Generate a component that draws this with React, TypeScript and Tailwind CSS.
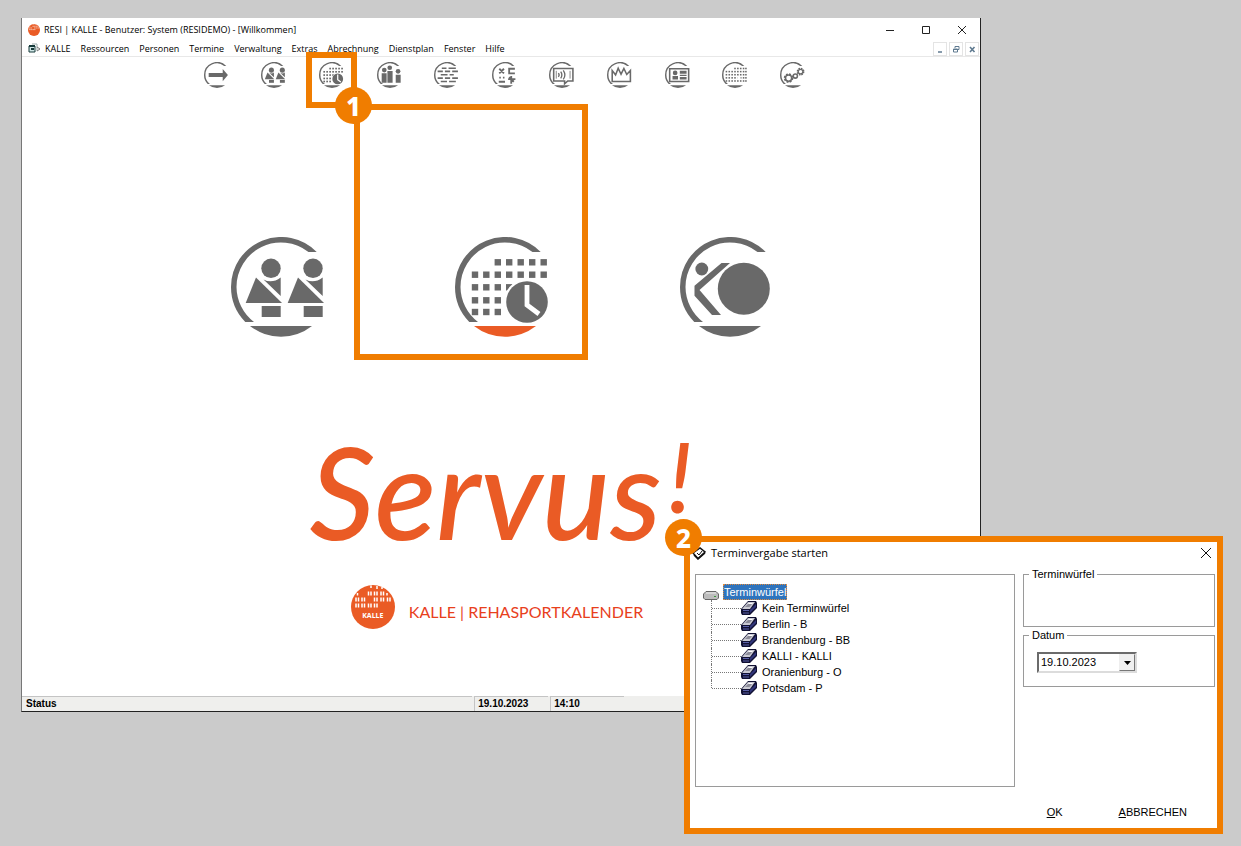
import { useState } from 'react'
import type { ReactNode } from 'react'

const menuItems = [
  'KALLE',
  'Ressourcen',
  'Personen',
  'Termine',
  'Verwaltung',
  'Extras',
  'Abrechnung',
  'Dienstplan',
  'Fenster',
  'Hilfe',
]

const cubes = [
  'Kein Terminwürfel',
  'Berlin - B',
  'Brandenburg - BB',
  'KALLI - KALLI',
  'Oranienburg - O',
  'Potsdam - P',
]

interface RingProps {
  className: string
  footClass?: string
  children: ReactNode
}

// Open ring with a filled foot, shared by all module icons
function Ring({ className, footClass = 'fill-[#696969]', children }: RingProps) {
  return (
    <svg viewBox="0 0 100 100" className={className} fill="#696969" aria-hidden="true">
      <path d="M85.7 15A50 50 0 0 0 0 50A50 50 0 0 0 14.3 85H23A44.5 44.5 0 0 1 5.5 50A44.5 44.5 0 0 1 77.5 15Z" />
      <path d="M19 89H81A50 50 0 0 1 19 89Z" className={footClass} />
      {children}
    </svg>
  )
}

function Person({ x }: { x: number }) {
  return (
    <g transform={`translate(${x} 0)`}>
      <circle cx="40" cy="31.3" r="9.7" />
      <path d="M25 40.5L51 66H14.7Z" />
      <path d="M32.5 42.5Q41 47 49.7 40.5V59Z" />
      <path d="M30.7 69H49.7V80H30.7Z" />
    </g>
  )
}

function PeopleGlyph() {
  return (
    <>
      <Person x={0} />
      <Person x={42} />
    </>
  )
}

const dotX = [20, 31.3, 42.8, 54.2, 65.7, 77.2, 88.7]
const dotY = [25.3, 37.7, 50.3, 63.3, 75]

function CalendarGlyph() {
  return (
    <>
      {dotY.map((y, row) =>
        dotX
          .filter((_, col) => (row === 0 ? col > 1 : row === 1 ? true : row === 2 ? col < 4 : col < 3))
          .map((x) => <rect key={`${x}-${y}`} x={x - 3.2} y={y - 3.2} width="6.4" height="6.4" />)
      )}
      <circle cx="72" cy="65" r="23" fill="#fff" />
      <circle cx="72" cy="65" r="20.8" />
      <path d="M72 48V68L84 77" fill="none" stroke="#fff" strokeWidth="4.8" />
    </>
  )
}

function BallGlyph() {
  return (
    <>
      <circle cx="63.8" cy="51.7" r="26" />
      <circle cx="21.8" cy="32" r="6.4" />
      <path d="M41.5 26H50L19.5 53L41 78H32L14.5 58.7V48.7Z" />
    </>
  )
}

function ArrowGlyph() {
  return <path d="M18 42H72V27L92 50L72 74V58H18Z" />
}

function GroupGlyph() {
  return (
    <>
      <circle cx="28" cy="31" r="9" />
      <circle cx="49" cy="22" r="9" />
      <circle cx="81" cy="36" r="9" />
      <path d="M18 43H37V80H18ZM40 35H60V80H40ZM72 49H91V80H72Z" />
    </>
  )
}

function DashesGlyph() {
  return (
    <path
      d="M30 24H48M56 24H84M14 36H34M42 36H62M70 36H92M26 49H52M60 49H76M14 62H34M42 62H62M70 62H92M26 75H50M58 75H84"
      fill="none"
      stroke="#696969"
      strokeWidth="6"
    />
  )
}

function SymbolsGlyph() {
  return (
    <path
      d="M28 26L46 44M46 26L28 44M88 26H66V44H88M28 60H34M42 60H48M26 76H50M74 54V84M62 66H90M66 58L84 76"
      fill="none"
      stroke="#696969"
      strokeWidth="7"
    />
  )
}

function ScreenGlyph() {
  return (
    <g fill="none" stroke="#696969" strokeWidth="6">
      <path d="M18 25H92V73H72L60 84V73H18Z" fill="#fff" />
      <path d="M28 34V64M81 34V64" strokeWidth="3" />
      <path d="M36 43Q42 50 36 57M45 37Q54 50 45 63M55 32Q67 50 55 67" strokeWidth="5" />
    </g>
  )
}

function CrownGlyph() {
  return (
    <path
      d="M20 75V33L33 50L43 24L54 47L65 25L76 48L90 33V75Z"
      fill="#fff"
      stroke="#696969"
      strokeWidth="6"
    />
  )
}

function CardGlyph() {
  return (
    <>
      <path d="M18 26H91V75H18Z" fill="#fff" stroke="#696969" strokeWidth="6" />
      <circle cx="39" cy="42" r="9" />
      <path d="M29 54H50V67H29ZM57 34H83V45H57ZM57 49H83V54H57ZM57 58H83V67H57Z" />
    </>
  )
}

function PlanGlyph() {
  return (
    <>
      {[25, 37, 49, 61, 73].map((y, row) =>
        [17, 28, 39, 50, 61, 72, 83, 92]
          .filter((x) => row > 0 || x > 40)
          .map((x) => <rect key={`${x}-${y}`} x={x - 3} y={y - 3} width="6" height="6" />)
      )}
      <circle cx="65" cy="62" r="7" fill="#fff" />
    </>
  )
}

function GearsGlyph() {
  return (
    <g fill="#fff" stroke="#696969">
      <circle cx="33" cy="62" r="15" strokeWidth="7" strokeDasharray="7 4.8" />
      <circle cx="33" cy="62" r="12" strokeWidth="6" />
      <circle cx="59" cy="54" r="8" strokeWidth="6" />
      <circle cx="79" cy="37" r="12" strokeWidth="6" strokeDasharray="6 3.4" />
      <circle cx="79" cy="37" r="9" strokeWidth="5" />
    </g>
  )
}

const tools = [
  { label: 'Beenden', glyph: <ArrowGlyph /> },
  { label: 'Personen', glyph: <PeopleGlyph /> },
  { label: 'Termine', glyph: <CalendarGlyph /> },
  { label: 'Gruppen', glyph: <GroupGlyph /> },
  { label: 'Listen', glyph: <DashesGlyph /> },
  { label: 'Abrechnung', glyph: <SymbolsGlyph /> },
  { label: 'Kartenleser', glyph: <ScreenGlyph /> },
  { label: 'Statistik', glyph: <CrownGlyph /> },
  { label: 'Ausweis', glyph: <CardGlyph /> },
  { label: 'Dienstplan', glyph: <PlanGlyph /> },
  { label: 'Einstellungen', glyph: <GearsGlyph /> },
]

function LogoMark({ className }: { className: string }) {
  return (
    <svg viewBox="0 0 44 44" className={className} aria-hidden="true">
      <circle cx="22" cy="22" r="22" fill="#ea5b25" />
      <path
        d="M20 .5V3M26 1V4M31 2V4M17.500 6.500V10.500M20 6.500V10.500M23.500 6.500V10.500M26 6.500V10.500M30 6.500V10.500M32.500 6.500V10.500M36 8V10.500M6.500 8V10.500M5 12.500V16.500M7.500 12.500V16.500M11 12.500V16.500M13.500 12.500V16.500M23.500 12.500V16.500M26 12.500V16.500M30 12.500V16.500M32.500 12.500V16.500M36.500 12.500V16.500M39 12.500V16.500M5 18.500V22.500M7.500 18.500V22.500M11 18.500V22.500M13.500 18.500V22.500M17.500 18.500V22.500M20 18.500V22.500M23.500 18.500V22.500M26 18.500V22.500"
        stroke="#fff"
        strokeWidth="1.5"
      />
    </svg>
  )
}

function TitleBar() {
  return (
    <header className="flex h-[23px] items-center pl-[6px] pr-[13px]">
      <LogoMark className="mr-[4px] size-3" />
      <h1 className="flex-1 whitespace-nowrap text-[9px]">
        RESI | KALLE - Benutzer: System (RESIDEMO) - [Willkommen]
      </h1>
      <div className="flex items-center gap-[26px]">
        <button aria-label="Minimieren">
          <svg viewBox="0 0 10 10" className="size-[10px]" stroke="#222">
            <path d="M1 5.500H9" />
          </svg>
        </button>
        <button aria-label="Maximieren">
          <svg viewBox="0 0 10 10" className="size-[10px]" stroke="#222" fill="none">
            <path d="M1.500 1.500H8.500V8.500H1.500Z" />
          </svg>
        </button>
        <button aria-label="Schließen">
          <svg viewBox="0 0 10 10" className="size-[10px]" stroke="#222">
            <path d="M1 1L9 9M9 1L1 9" />
          </svg>
        </button>
      </div>
    </header>
  )
}

function MenuBar() {
  return (
    <nav className="flex h-4 items-center border-b border-[#e8e8e8] pl-[6px] pr-px">
      <svg viewBox="0 0 13 11" className="mr-[4px] h-[11px] w-[13px]" aria-hidden="true">
        <path d="M1 3H7V9H1Z" fill="#cfe6e6" stroke="#173b3b" />
        <path d="M1 3H7M3 6H6" stroke="#173b3b" strokeWidth="2" />
        <path d="M4 1H9V8" fill="none" stroke="#9aa" />
        <path d="M9 4L12 6L9 8" fill="none" stroke="#777" />
      </svg>
      <ul className="flex flex-1 gap-[10px] text-[9px]">
        {menuItems.map((item) => (
          <li key={item}>
            <button>{item}</button>
          </li>
        ))}
      </ul>
      <div className="flex gap-[2px]">
        <button aria-label="Fenster minimieren" className="border border-[#e4e4e4] p-px">
          <svg viewBox="0 0 10 10" className="size-[10px]" stroke="#5f7a90" strokeWidth="1.500">
            <path d="M3 8H7" />
          </svg>
        </button>
        <button aria-label="Fenster wiederherstellen" className="border border-[#e4e4e4] p-px">
          <svg viewBox="0 0 10 10" className="size-[10px]" stroke="#5f7a90" fill="none">
            <path d="M4 4V2.500H8V5.500H7M2.500 5H6.500V8H2.500ZM2.500 5.500H6.500" />
          </svg>
        </button>
        <button aria-label="Fenster schließen" className="border border-[#e4e4e4] p-px">
          <svg viewBox="0 0 10 10" className="size-[10px]" stroke="#5f7a90" strokeWidth="1.600">
            <path d="M3 3L7.500 8M7.500 3L3 8" />
          </svg>
        </button>
      </div>
    </nav>
  )
}

function Toolbar() {
  return (
    <div className="ml-[17%] mr-[16%] mt-[5px] grid grid-cols-11 pl-[3px] pr-[5px]">
      {tools.map((tool) => (
        <button key={tool.label} aria-label={tool.label} className="flex justify-center">
          <Ring className="size-[26px]">{tool.glyph}</Ring>
        </button>
      ))}
    </div>
  )
}

function MainWindow() {
  return (
    <main className="ml-[21px] mr-[260px] border-b border-l border-r border-[#222] border-l-[#777] bg-white">
      <TitleBar />
      <MenuBar />
      <Toolbar />
      <div className="ml-[15%] mr-[14%] mt-[149px] grid grid-cols-3 pl-[3px] pr-[4px]">
        <button aria-label="Personen" className="flex justify-center">
          <Ring className="size-[100px]">
            <PeopleGlyph />
          </Ring>
        </button>
        <button aria-label="Terminvergabe" className="flex justify-center">
          <Ring className="size-[100px]" footClass="fill-[#ea5b25]">
            <CalendarGlyph />
          </Ring>
        </button>
        <button aria-label="Rehasport" className="flex justify-center">
          <Ring className="size-[100px]">
            <BallGlyph />
          </Ring>
        </button>
      </div>
      <p className="mt-[84px] flex items-start justify-center gap-[6px] font-['Lato',sans-serif] font-medium italic text-[#ea5b25]">
        <span className="text-[128px] leading-[140px]">Servus</span>
        <span className="text-[96px] leading-[110px]">!</span>
      </p>
      <div className="mt-[24px] flex items-center justify-center gap-[14px] pr-[8px]">
        <div className="relative">
          <LogoMark className="size-[44px]" />
          <span className="absolute inset-x-0 top-[26px] text-center text-[7px] font-bold leading-[10px] text-white">
            KALLE
          </span>
        </div>
        <p className="mt-[10px] font-['Lato',sans-serif] text-base text-[#e8401c]">
          KALLE | REHASPORTKALENDER
        </p>
      </div>
      <footer className="mt-[67px] flex h-[15px] bg-[#efefed] font-['Liberation_Sans',Arial,sans-serif] text-[10px] font-bold leading-[14px]">
        <span className="w-[47%] border-t border-[#c4c4c4] pl-[4px]">Status</span>
        <span className="ml-[2px] w-[74px] border-l border-t border-[#c4c4c4] pl-[3px]">19.10.2023</span>
        <span className="ml-[2px] w-[74px] border-l border-t border-[#c4c4c4] pl-[3px]">14:10</span>
      </footer>
    </main>
  )
}

function CubeIcon() {
  return (
    <svg viewBox="0 0 16 15" className="h-[15px] w-4" aria-hidden="true">
      <path d="M0 8L7 0H15L16 2V7L9 14H1L0 12Z" fill="#111133" />
      <path d="M1 8L7 1H14L9 8Z" fill="#c9c9d2" />
      <path d="M4 6L7 3H11L8.500 6Z" fill="#8b8b98" />
      <path d="M8 2H12L11 3H7Z" fill="#fff" />
      <path d="M9 9L15 3V6L9 12Z" fill="#30357a" />
      <path d="M2 9.500H8M2 12H8" stroke="#5a60a8" />
    </svg>
  )
}

function CubeTree() {
  const [selected, setSelected] = useState('Terminwürfel')

  return (
    <div className="min-h-[213px] flex-1 border border-[#9a9a9a] pl-[7px] pt-[9px] text-[11px] leading-4">
      <div className="flex items-end">
        <svg viewBox="0 0 16 9" className="mr-[4px] h-[9px] w-4" aria-hidden="true">
          <path d="M3 .5H13L15.500 3V7L14 8.500H2L.5 7V3Z" fill="#bcbcbc" stroke="#666" />
          <path d="M3 2H13" stroke="#eee" />
          <path d="M11 5.500H13" stroke="#3a9a3a" />
        </svg>
        <button
          onClick={() => setSelected('Terminwürfel')}
          className={selected === 'Terminwürfel' ? 'bg-[#2f74bd] px-px text-white outline-1 -outline-offset-1 outline-dotted outline-[#e08a3c]' : 'px-px'}
        >
          Terminwürfel
        </button>
      </div>
      <ul className="ml-[8px]">
        {cubes.map((cube, i) => (
          <li key={cube} className="flex h-4 items-center">
            <span
              className={
                i === cubes.length - 1
                  ? 'h-2 self-start border-l border-dotted border-[#777]'
                  : 'h-4 border-l border-dotted border-[#777]'
              }
            />
            <span className="w-[29px] border-t border-dotted border-[#777]" />
            <CubeIcon />
            <button
              onClick={() => setSelected(cube)}
              className={selected === cube ? 'ml-[4px] bg-[#2f74bd] px-px text-white' : 'ml-[4px] px-px'}
            >
              {cube}
            </button>
          </li>
        ))}
      </ul>
    </div>
  )
}

function AppointmentDialog() {
  return (
    <section
      role="dialog"
      aria-label="Terminvergabe starten"
      className="absolute left-[684px] right-[18px] top-[536px] border-6 border-[#f07d00] bg-white pb-[8px]"
    >
      <header className="flex h-[22px] items-center pl-[2px] pr-[5px]">
        <svg viewBox="0 0 14 14" className="mr-[5px] size-[14px]" aria-hidden="true">
          <path d="M1 7L8 2L13 6L6 12.500Z" fill="#fff" stroke="#111" strokeWidth="1.500" />
          <path d="M2 9L6 13L13 7" fill="none" stroke="#111" strokeWidth="1.500" />
          <path d="M5 7L7 9L10 5" fill="none" stroke="#111" />
          <path d="M1 3L4 4" stroke="#e0b030" strokeWidth="2" />
        </svg>
        <h2 className="flex-1 text-[11px]">Terminvergabe starten</h2>
        <button aria-label="Dialog schließen">
          <svg viewBox="0 0 12 12" className="size-3" stroke="#111">
            <path d="M1 1L11 11M11 1L1 11" />
          </svg>
        </button>
      </header>
      <div className="mt-[10px] flex gap-2 pl-[5px] pr-[2px] font-['Liberation_Sans',Arial,sans-serif] text-[11px]">
        <CubeTree />
        <div className="w-48">
          <fieldset className="-mt-[8px] h-[61px] border border-[#9a9a9a] pl-[5px]">
            <legend className="px-[3px] leading-4">Terminwürfel</legend>
          </fieldset>
          <fieldset className="h-[60px] border border-[#9a9a9a] pl-[5px]">
            <legend className="px-[3px] leading-4">
              <label htmlFor="datum">Datum</label>
            </legend>
            <div className="relative ml-[8px] mt-[9px] w-[100px]">
              <select
                id="datum"
                className="block h-[21px] w-full appearance-none border-2 border-[#dcdcdc] border-l-[#6b6b6b] border-t-[#6b6b6b] bg-white pl-[2px]"
              >
                <option>19.10.2023</option>
              </select>
              <span className="pointer-events-none absolute bottom-[2px] right-[2px] top-[2px] flex w-[16px] items-center justify-center border border-[#eee] border-b-[#777] border-r-[#777] bg-[#f0f0f0]">
                <svg viewBox="0 0 7 4" className="h-[4px] w-[7px]">
                  <path d="M0 0H7L3.500 4Z" />
                </svg>
              </span>
            </div>
          </fieldset>
        </div>
      </div>
      <div className="mt-[17px] flex justify-end gap-[56px] pr-[30px] font-['Liberation_Sans',Arial,sans-serif] text-[11px] leading-4">
        <button>
          <u>O</u>K
        </button>
        <button>
          <u>A</u>BBRECHEN
        </button>
      </div>
    </section>
  )
}

// Numbered step marker; sits on top of the frames
function Step({ n, className }: { n: number; className: string }) {
  return (
    <span
      className={`absolute flex size-[37px] items-center justify-center rounded-full bg-[#f07d00] font-['Noto_Sans',sans-serif] text-[26px] font-extrabold leading-8 text-white ${className}`}
    >
      {n}
    </span>
  )
}

export default function App() {
  return (
    <div className="relative min-h-screen bg-[#cbcbcb] pb-[134px] pt-[18px] font-['Open_Sans',sans-serif] text-black">
      <MainWindow />
      <div className="pointer-events-none absolute left-[306px] top-[52px] h-[56px] w-[51px] border-6 border-[#f07d00]" />
      <div className="pointer-events-none absolute left-[354px] top-[104px] h-[256px] w-[234px] border-6 border-[#f07d00]" />
      <Step n={1} className="left-[335px] top-[87px]" />
      <AppointmentDialog />
      <Step n={2} className="left-[665px] top-[519px]" />
    </div>
  )
}
